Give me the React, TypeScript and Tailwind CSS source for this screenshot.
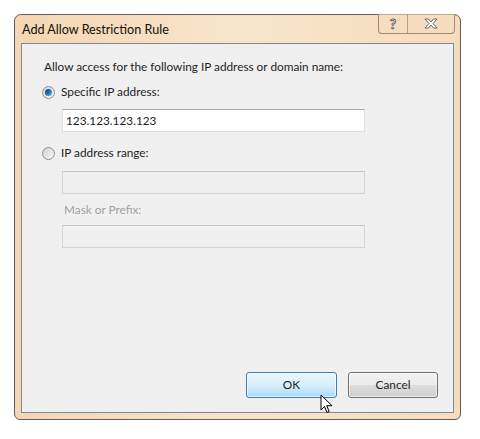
import React from 'react'

const font = "font-['Lato','Segoe_UI','Noto_Sans',sans-serif]"

const Radio: React.FC<{ checked?: boolean; label: string }> = ({ checked, label }) => (
  <div className="flex items-center h-[16px]">
    <span className="relative w-[13px] h-[13px] rounded-full border border-[#8e8f8f] bg-gradient-to-br from-[#d2d4d6] to-[#f6f6f6] flex items-center justify-center">
      {checked && (
        <span className="w-[7px] h-[7px] rounded-full bg-gradient-to-br from-[#0b3f6d] via-[#1f6fb3] to-[#6cc0f2]" />
      )}
    </span>
    <span className="ml-[6px] text-[11.8px] text-[#1e1e1e]">{label}</span>
  </div>
)

const TextBox: React.FC<{ value?: string; disabled?: boolean }> = ({ value, disabled }) => (
  <div
    className={
      'ml-[20px] w-[303px] h-[23px] border flex items-center px-[3px] text-[11.8px] ' +
      (disabled
        ? 'bg-[#f0f0f0] border-[#d4d4d4] border-t-[#c6c6c6]'
        : 'bg-white border-[#dbdfe6] border-t-[#abadb3] text-[#1e1e1e]')
    }
  >
    {value}
  </div>
)

export default function App() {
  return (
    <div className={`w-[480px] h-[439px] bg-white relative ${font}`}>
      <div className="absolute left-[14px] top-[14px] w-[447px] h-[406px] rounded-t-[7px] rounded-b-[6px] border border-[#5e5e5e] bg-gradient-to-r from-[#f5d6b2] via-[#f9e4cb] to-[#f7dcbc] flex flex-col px-[6px] pb-[6px]">
        <div className="h-[28px] flex items-start relative">
          <span className="ml-[1px] mt-[6px] text-[12.6px] text-[#111]">Add Allow Restriction Rule</span>
          <div className="absolute right-[-1px] top-[-1px] flex h-[20px] rounded-b-[4px] border border-t-0 border-[#9c8a76] bg-[#f6dcc0]/60">
            <div className="w-[29px] flex items-center justify-center border-r border-[#b49e86]">
              <span className="text-[14px] font-bold leading-none text-white [-webkit-text-stroke:0.8px_#555]">?</span>
            </div>
            <div className="w-[46px] flex items-center justify-center">
              <svg width="14" height="11" viewBox="0 0 14 11">
                <path
                  d="M1 1h3.5L7 4l2.5-3H13L9 5.5 13 10H9.5L7 7l-2.5 3H1l4-4.5z"
                  fill="#fff"
                  stroke="#5a5a5a"
                  strokeWidth="0.9"
                  strokeLinejoin="round"
                />
              </svg>
            </div>
          </div>
        </div>
        <div className="flex-1 border border-[#7e8a99] bg-[#f0f0f0] flex flex-col pl-[20px] pr-[15px] pb-[14px]">
          <div className="mt-[15px] ml-[2px] text-[11.8px] text-[#1e1e1e] leading-[16px]">
            Allow access for the following IP address or domain name:
          </div>
          <div className="mt-[9px]">
            <Radio checked label="Specific IP address:" />
          </div>
          <div className="mt-[9px]">
            <TextBox value="123.123.123.123" />
          </div>
          <div className="mt-[13px]">
            <Radio label="IP address range:" />
          </div>
          <div className="mt-[10px]">
            <TextBox disabled />
          </div>
          <div className="mt-[8px] ml-[22px] text-[11.8px] text-[#a0a0a0] leading-[16px]">Mask or Prefix:</div>
          <div className="mt-[7px]">
            <TextBox disabled />
          </div>
          <div className="flex-1" />
          <div className="flex justify-end gap-[11px]">
            <button className="w-[91px] h-[26px] rounded-[3px] border border-[#3c7fb1] bg-gradient-to-b from-[#eaf6fd] via-[#d9f0fc] to-[#a7d9f5] text-[11.8px] text-[#1e1e1e] shadow-[inset_0_0_0_1px_rgba(255,255,255,0.6)]">
              OK
            </button>
            <button className="w-[90px] h-[26px] rounded-[3px] border border-[#707070] bg-[linear-gradient(#f2f2f2_0%,#ebebeb_48%,#dddddd_52%,#cfcfcf_100%)] text-[11.8px] text-[#1e1e1e] shadow-[inset_0_0_0_1px_rgba(255,255,255,0.6)]">
              Cancel
            </button>
          </div>
        </div>
      </div>
      <svg className="absolute left-[320px] top-[394px]" width="14" height="20" viewBox="0 0 14 20">
        <path d="M1 1v15l3.5-3.5 2.5 6 2.2-1-2.5-5.8H12z" fill="#fff" stroke="#000" strokeWidth="1" strokeLinejoin="round" />
      </svg>
    </div>
  )
}
